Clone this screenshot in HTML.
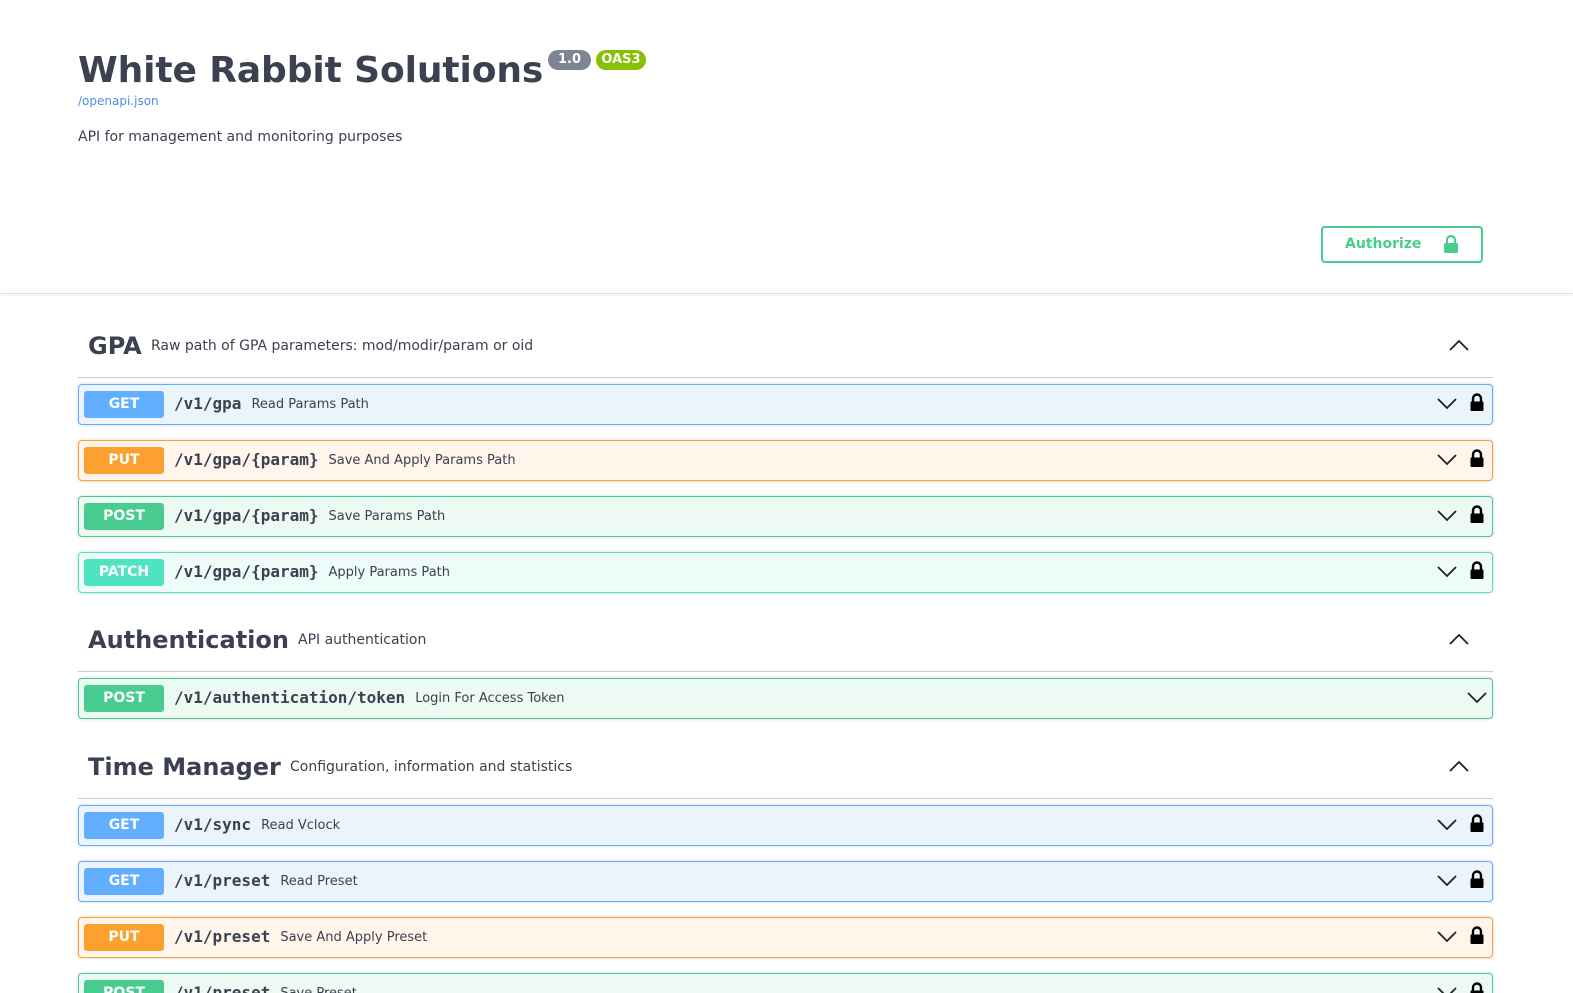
<!DOCTYPE html>
<html><head><meta charset="utf-8"><style>
*{box-sizing:border-box;margin:0;padding:0}
html,body{width:1573px;height:993px;overflow:hidden}
body{background:#fff;font-family:"DejaVu Sans","Liberation Sans",sans-serif;color:#3b4151;position:relative}
.abs{position:absolute}
h1{position:absolute;left:78px;top:50px;font-size:36px;font-weight:bold;color:#3b4151;white-space:nowrap;letter-spacing:-0.1px}
.badge{position:absolute;top:50px;height:20px;border-radius:57px;color:#fff;font-size:13px;font-weight:bold;line-height:20px;text-align:center}
.sep{position:absolute;left:0;top:293px;width:1573px;height:1px;background:#e0e0e0;box-shadow:0 1px 2px rgba(0,0,0,.1)}
.auth{position:absolute;left:1321px;top:226px;width:162px;height:37px;border:2px solid #49cc90;border-radius:4px;color:#49cc90;font-weight:bold;font-size:14px;line-height:33px;padding-left:22px}
.tag{position:absolute;left:78px;width:1415px;height:48px;border-bottom:1px solid #ccc}
.tag b{position:absolute;left:10px;font-size:24px;top:2px;white-space:nowrap}
.tag span{position:absolute;font-size:14px;top:8px;white-space:nowrap}
.tag svg{position:absolute;right:24px;top:9px}
.op{position:absolute;left:78px;width:1415px;height:41px;border:1px solid;border-radius:4px;box-shadow:0 0 3px rgba(0,0,0,.19)}
.m{position:absolute;left:5px;top:6px;width:80px;height:27px;border-radius:3px;color:#fff;font-weight:bold;font-size:14px;text-align:center;line-height:27px}
.p{position:absolute;left:95px;top:9px;font-family:"DejaVu Sans Mono","Liberation Mono",monospace;font-weight:bold;font-size:16px;white-space:nowrap}
.s{font-family:"DejaVu Sans",sans-serif;font-weight:normal;font-size:13px;margin-left:10px;position:relative;top:-1px}
.get{background:#ebf3fb;border-color:#61affe}.get .m{background:#61affe}
.put{background:#fff5ea;border-color:#fca130}.put .m{background:#fca130}
.post{background:#edfaf4;border-color:#49cc90}.post .m{background:#49cc90}
.patch{background:#eefcf9;border-color:#50e3c2}.patch .m{background:#50e3c2}
</style></head><body>
<h1>White Rabbit Solutions</h1>
<div class="badge" style="left:548px;width:43px;background:#7d8492">1.0</div>
<div class="badge" style="left:596px;width:50px;background:#89bf04">OAS3</div>
<div class="abs" style="left:78px;top:94px;font-size:12px;color:#4990e2">/openapi.json</div>
<div class="abs" style="left:78px;top:129px;font-size:14px">API for management and monitoring purposes</div>
<div class="auth">Authorize<svg style="position:absolute;left:120px;top:7px" width="16" height="19" viewBox="0 0 16 19"><path d="M4 8V5a4 4 0 0 1 8 0v3" fill="none" stroke="#49cc90" stroke-width="2.2"/><rect x="1" y="8" width="14" height="10" rx="1.5" fill="#49cc90"/></svg></div>
<div class="sep"></div>

<div class="tag" style="top:330px"><b>GPA</b><span style="left:73px">Raw path of GPA parameters: mod/modir/param or oid</span><svg width="20" height="12" viewBox="0 0 20 12"><path d="M1 11L10 2l9 9" fill="none" stroke="#222" stroke-width="1.8"/></svg></div>
<div class="tag" style="top:624px"><b>Authentication</b><span style="left:220px">API authentication</span><svg width="20" height="12" viewBox="0 0 20 12"><path d="M1 11L10 2l9 9" fill="none" stroke="#222" stroke-width="1.8"/></svg></div>
<div class="tag" style="top:751px"><b>Time Manager</b><span style="left:212px">Configuration, information and statistics</span><svg width="20" height="12" viewBox="0 0 20 12"><path d="M1 11L10 2l9 9" fill="none" stroke="#222" stroke-width="1.8"/></svg></div>

<div class="op get" style="top:384px"><div class="m">GET</div><div class="p">/v1/gpa<span class="s">Read Params Path</span></div></div>
<div class="op put" style="top:440px"><div class="m">PUT</div><div class="p">/v1/gpa/{param}<span class="s">Save And Apply Params Path</span></div></div>
<div class="op post" style="top:496px"><div class="m">POST</div><div class="p">/v1/gpa/{param}<span class="s">Save Params Path</span></div></div>
<div class="op patch" style="top:552px"><div class="m">PATCH</div><div class="p">/v1/gpa/{param}<span class="s">Apply Params Path</span></div></div>
<div class="op post" style="top:678px"><div class="m">POST</div><div class="p">/v1/authentication/token<span class="s">Login For Access Token</span></div></div>
<div class="op get" style="top:805px"><div class="m">GET</div><div class="p">/v1/sync<span class="s">Read Vclock</span></div></div>
<div class="op get" style="top:861px"><div class="m">GET</div><div class="p">/v1/preset<span class="s">Read Preset</span></div></div>
<div class="op put" style="top:917px"><div class="m">PUT</div><div class="p">/v1/preset<span class="s">Save And Apply Preset</span></div></div>
<div class="op post" style="top:973px"><div class="m">POST</div><div class="p">/v1/preset<span class="s">Save Preset</span></div></div>

<svg width="0" height="0" style="position:absolute"><defs>
<symbol id="cv" viewBox="0 0 20 12"><path d="M1 1l9 9 9-9" fill="none" stroke="#222" stroke-width="1.8"/></symbol>
<symbol id="lk" viewBox="0 0 16 19"><path d="M4 9V5.5a4 4 0 0 1 8 0V9" fill="none" stroke="#000" stroke-width="2.4"/><rect x="1.5" y="8.5" width="13" height="9.5" rx="1" fill="#000"/></symbol>
</defs></svg>
<div id="icons"></div>
<script>
var tops=[384,440,496,552,805,861,917,973],h='';
tops.forEach(function(t){h+='<svg class="abs" style="left:1437px;top:'+(t+14)+'px" width="20" height="12"><use href="#cv"/></svg><svg class="abs" style="left:1469px;top:'+(t+9)+'px" width="16" height="19"><use href="#lk"/></svg>';});
h+='<svg class="abs" style="left:1467px;top:692px" width="20" height="12"><use href="#cv"/></svg>';
document.getElementById('icons').innerHTML=h;
</script>
</body></html>
